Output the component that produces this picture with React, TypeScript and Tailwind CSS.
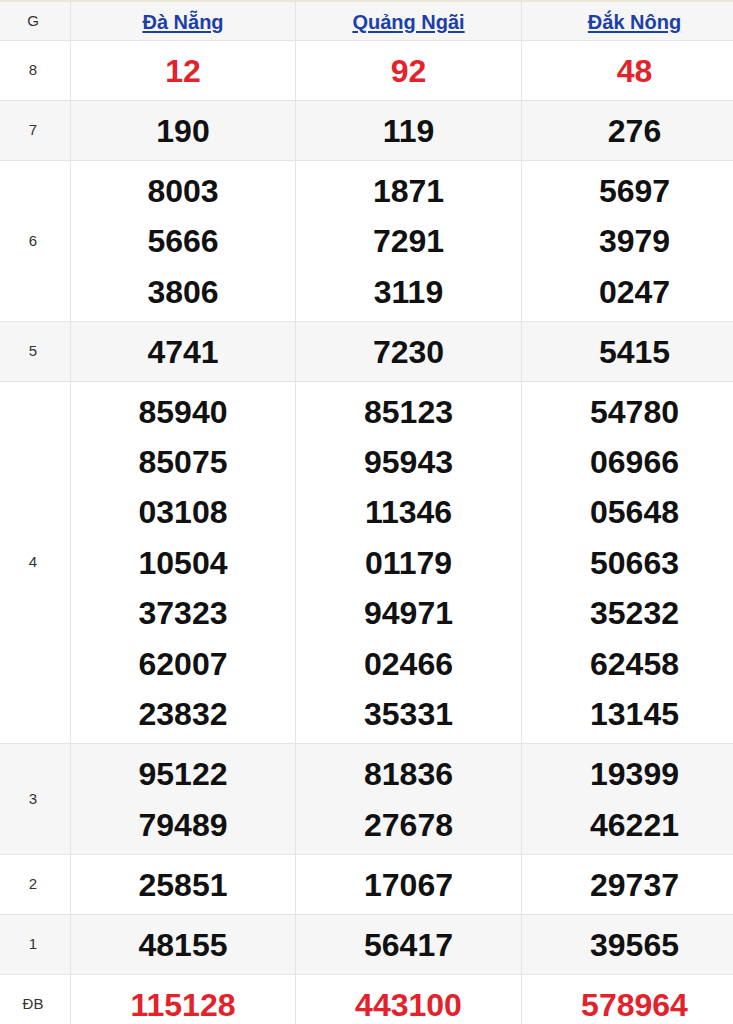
import React from "react";

type Row = { label: string; a: string[]; b: string[]; c: string[]; gray?: boolean; red?: boolean };

const rows: Row[] = [
  { label: "8", a: ["12"], b: ["92"], c: ["48"], red: true },
  { label: "7", a: ["190"], b: ["119"], c: ["276"], gray: true },
  { label: "6", a: ["8003", "5666", "3806"], b: ["1871", "7291", "3119"], c: ["5697", "3979", "0247"] },
  { label: "5", a: ["4741"], b: ["7230"], c: ["5415"], gray: true },
  {
    label: "4",
    a: ["85940", "85075", "03108", "10504", "37323", "62007", "23832"],
    b: ["85123", "95943", "11346", "01179", "94971", "02466", "35331"],
    c: ["54780", "06966", "05648", "50663", "35232", "62458", "13145"],
  },
  { label: "3", a: ["95122", "79489"], b: ["81836", "27678"], c: ["19399", "46221"], gray: true },
  { label: "2", a: ["25851"], b: ["17067"], c: ["29737"] },
  { label: "1", a: ["48155"], b: ["56417"], c: ["39565"], gray: true },
  { label: "ĐB", a: ["115128"], b: ["443100"], c: ["578964"], red: true },
];

const font = { fontFamily: '"Liberation Sans", Arial, sans-serif' };

function NumCell({ nums, red, w }: { nums: string[]; red?: boolean; w: string }) {
  return (
    <div className={`${w} shrink-0 border-r border-[#e4e4e4] pt-[4.8px] pb-[3.76px] flex flex-col items-center justify-center`}>
      {nums.map((n, i) => (
        <div
          key={i}
          className={`leading-[50.44px] text-[32px] font-bold ${red ? "text-[#e3222b]" : "text-[#111111]"}`}
        >
          {n}
        </div>
      ))}
    </div>
  );
}

export default function App() {
  return (
    <div className="w-[733px] h-[1024px] overflow-hidden bg-white" style={font}>
      <div className="w-[760px]">
        <div className="flex h-[41px] bg-[#f6f6f6] border-t-2 border-t-[#ebe8da] border-b border-b-[#e4e4e4]">
          <div className="w-[71px] shrink-0 border-r border-[#e4e4e4] flex items-center justify-center pr-[4px] text-[15px] text-[#333]">
            G
          </div>
          {["Đà Nẵng", "Quảng Ngãi", "Đắk Nông"].map((n, i) => (
            <div
              key={n}
              className={`${i === 0 ? "w-[225px]" : "w-[226px]"} shrink-0 border-r border-[#e4e4e4] flex items-center justify-center pt-[1px]`}
            >
              <a href="#" className="text-[20px] font-bold text-[#1c3fa8] underline underline-offset-2">
                {n}
              </a>
            </div>
          ))}
        </div>
        {rows.map((r) => (
          <div
            key={r.label}
            className={`flex border-b border-[#e4e4e4] ${r.gray ? "bg-[#f6f6f6]" : "bg-white"}`}
          >
            <div className="w-[71px] shrink-0 border-r border-[#e4e4e4] flex items-center justify-center pr-[4px] text-[15px] text-[#333]">
              {r.label}
            </div>
            <NumCell nums={r.a} red={r.red} w="w-[225px]" />
            <NumCell nums={r.b} red={r.red} w="w-[226px]" />
            <NumCell nums={r.c} red={r.red} w="w-[226px]" />
          </div>
        ))}
      </div>
    </div>
  );
}
